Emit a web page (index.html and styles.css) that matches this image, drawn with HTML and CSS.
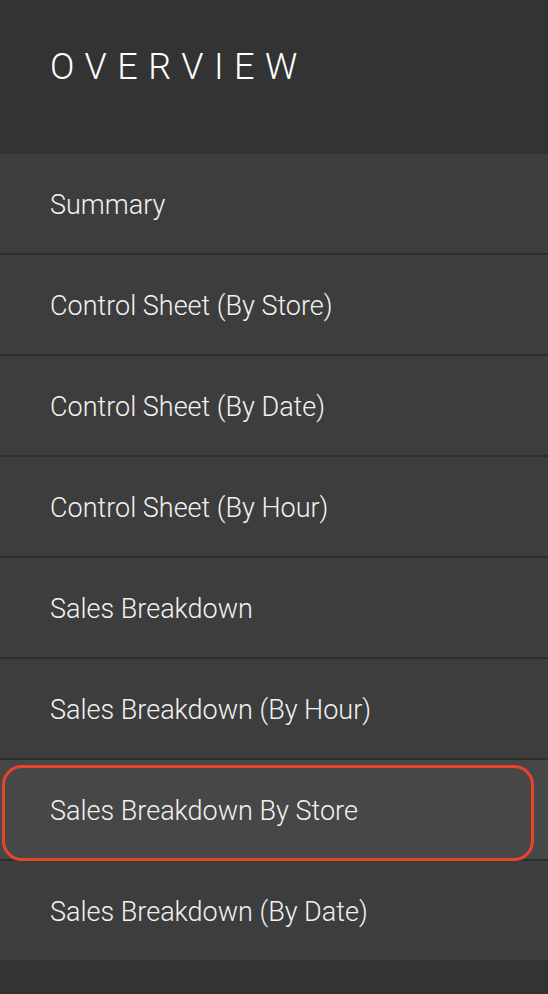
FILE: index.html
```html
<!DOCTYPE html>
<html>
<head>
<meta charset="utf-8">
<link rel="stylesheet" href="styles.css">
</head>
<body>
<div class="panel">
  <header class="head"><h1 class="title">OVERVIEW</h1></header>
  <nav class="menu">
    <a class="item">Summary</a>
    <a class="item">Control Sheet (By Store)</a>
    <a class="item">Control Sheet (By Date)</a>
    <a class="item">Control Sheet (By Hour)</a>
    <a class="item">Sales Breakdown</a>
    <a class="item">Sales Breakdown (By Hour)</a>
    <a class="item active">Sales Breakdown By Store</a>
    <a class="item">Sales Breakdown (By Date)</a>
  </nav>
</div>
</body>
</html>
```
FILE: styles.css
```css
html, body {
  margin: 0;
  padding: 0;
  background: #333333;
}
body {
  width: 548px;
  height: 994px;
  overflow: hidden;
  font-family: Roboto, "Liberation Sans", sans-serif;
  font-weight: 300;
  color: #f2f2f2;
}
.head {
  height: 154px;
  box-sizing: border-box;
  padding: 45px 0 0 50px;
  background: #333333;
}
.title {
  margin: 0;
  font-size: 36px;
  font-weight: 300;
  letter-spacing: 10.5px;
  line-height: 44px;
  color: #ffffff;
}
.menu {
  display: flex;
  flex-direction: column;
  gap: 2px;
  background: #2e2e2e;
}
.item {
  position: relative;
  display: flex;
  align-items: center;
  height: 99px;
  box-sizing: border-box;
  padding: 3px 0 0 50px;
  background: #3d3d3d;
  font-size: 27px;
}
.item.active {
  background: #474747;
}
.item.active::after {
  content: "";
  position: absolute;
  left: 2px;
  top: 5px;
  width: 532px;
  height: 96px;
  box-sizing: border-box;
  border: 3px solid #e8432b;
  border-radius: 20px;
}
```
